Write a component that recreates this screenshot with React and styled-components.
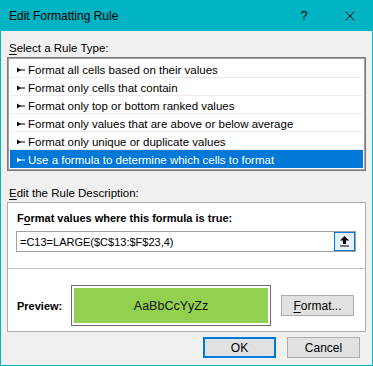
import React from 'react';
import styled, { createGlobalStyle } from 'styled-components';

const GlobalStyle = createGlobalStyle`
  html, body {
    margin: 0;
    padding: 0;
    background: #f0f0f0;
  }
  * {
    box-sizing: border-box;
  }
`

const teal = '#00b4c3';
const blue = '#0078d7';

const Window = styled.div`
  width: 373px;
  height: 366px;
  display: flex;
  flex-direction: column;
  background: #f0f0f0;
  border: 1px solid ${teal};
  border-top: 0;
  font-family: "Segoe UI", "Liberation Sans", sans-serif;
  font-size: 11.5px;
  color: #000;
`

const TitleBar = styled.div`
  height: 31px;
  margin: 0 -1px;
  display: flex;
  align-items: center;
  background: ${teal};
`

const Title = styled.div`
  flex: 1;
  padding-left: 9px;
  font-size: 12px;
  color: #000;
`

const TitleButton = styled.div`
  width: 46px;
  height: 31px;
  display: flex;
  align-items: center;
  justify-content: center;
  font-size: 13px;
  color: #000;
`

const Content = styled.div`
  flex: 1;
  display: flex;
  flex-direction: column;
  padding: 0 6px;
`

const Label = styled.div`
  height: 16px;
  line-height: 16px;
  margin-top: ${p => p.top}px;
  margin-bottom: 1px;
  padding-left: 2px;
`

const Key = styled.span`
  text-decoration: underline;
  text-underline-offset: 2px;
`

const ListBox = styled.div`
  height: 114px;
  padding: 2px 1px 1px;
  background: #fff;
  border: 1px solid #7a7a7a;
  box-shadow: inset 0 0 0 1px #a0a0a0;
  display: flex;
  flex-direction: column;
  & > div {
    margin: 0 1px;
  }
`

const Row = styled.div`
  height: 18px;
  flex-shrink: 0;
  display: flex;
  align-items: center;
  gap: 3px;
  padding: 2px 0 0 7px;
  background: ${p => (p.selected ? blue : '#fff')};
  color: ${p => (p.selected ? '#fff' : '#000')};
  border-bottom: 1px solid ${p => (p.selected ? blue : '#ececec')};
  white-space: nowrap;
`

const DescBox = styled.div`
  height: 130px;
  background: #fff;
  border: 1px solid #adadad;
  display: flex;
  flex-direction: column;
`

const Heading = styled.div`
  height: 16px;
  line-height: 16px;
  margin-top: 7px;
  padding-left: 9px;
  font-size: 11px;
  font-weight: bold;
`

const FormulaInput = styled.div`
  height: 21px;
  margin: 5px 9px 0 8px;
  border: 1px solid #a0a0a0;
  display: flex;
  align-items: center;
  background: #fff;
`

const FormulaText = styled.div`
  flex: 1;
  padding: 1px 0 0 3px;
  font-size: 11px;
`

const CollapseButton = styled.div`
  width: 21px;
  height: 19px;
  border: 1px solid ${blue};
  background: #e5f1fb;
  display: flex;
  align-items: center;
  justify-content: center;
`

const Separator = styled.div`
  height: 1px;
  margin-top: 16px;
  background: #c8c8c8;
`

const PreviewRow = styled.div`
  display: flex;
  align-items: center;
  margin-top: 16px;
  padding-left: 9px;
`

const PreviewLabel = styled.div`
  width: 54px;
  font-size: 11px;
  font-weight: bold;
`

const PreviewFrame = styled.div`
  width: 200px;
  height: 41px;
  padding: 2px;
  border: 1px solid #6d6d6d;
  background: #fff;
`

const PreviewFill = styled.div`
  height: 100%;
  background: #92d050;
  display: flex;
  align-items: center;
  justify-content: center;
  font-size: 12.5px;
  color: #111;
`

const Button = styled.div`
  width: 73px;
  height: 21px;
  display: flex;
  align-items: center;
  justify-content: center;
  font-size: 12px;
  background: #e1e1e1;
  border: ${p => (p.primary ? `2px solid ${blue}` : '1px solid #adadad')};
  margin-left: ${p => p.gap || 0}px;
`

const Footer = styled.div`
  display: flex;
  justify-content: flex-end;
  margin-top: 5px;
  padding-right: 6px;
`

const Pointer = ({ color }) => (
  <svg width="8" height="6" viewBox="0 0 8 6">
    <polygon points="0,0.5 0,5.5 4,3" fill={color} />
    <rect x="3" y="2.5" width="5" height="1" fill={color} />
  </svg>
)

const UploadIcon = () => (
  <svg width="9" height="11" viewBox="0 0 9 11">
    <polygon points="4.5,0 9,4.5 6,4.5 6,8 3,8 3,4.5 0,4.5" fill="#000" />
    <rect x="0" y="9.5" width="9" height="1" fill="#000" />
  </svg>
)

const CloseIcon = () => (
  <svg width="10" height="10" viewBox="0 0 10 10">
    <path d="M0.5 0.5 L9.5 9.5 M9.5 0.5 L0.5 9.5" stroke="#000" strokeWidth="1" />
  </svg>
)

const ruleTypes = [
  'Format all cells based on their values',
  'Format only cells that contain',
  'Format only top or bottom ranked values',
  'Format only values that are above or below average',
  'Format only unique or duplicate values',
  'Use a formula to determine which cells to format',
]

const App = () => {
  return (
    <>
      <GlobalStyle />
      <Window>
        <TitleBar>
          <Title>Edit Formatting Rule</Title>
          <TitleButton>?</TitleButton>
          <TitleButton><CloseIcon /></TitleButton>
        </TitleBar>
        <Content>
          <Label top={9}><Key>S</Key>elect a Rule Type:</Label>
          <ListBox>
            {ruleTypes.map((t, i) => {
              const selected = i === ruleTypes.length - 1;
              return (
                <Row key={t} selected={selected}>
                  <Pointer color={selected ? '#fff' : '#000'} />
                  {t}
                </Row>
              )
            })}
          </ListBox>
          <Label top={14}><Key>E</Key>dit the Rule Description:</Label>
          <DescBox>
            <Heading>F<Key>o</Key>rmat values where this formula is true:</Heading>
            <FormulaInput>
              <FormulaText>=C13=LARGE($C$13:$F$23,4)</FormulaText>
              <CollapseButton><UploadIcon /></CollapseButton>
            </FormulaInput>
            <Separator />
            <PreviewRow>
              <PreviewLabel>Preview:</PreviewLabel>
              <PreviewFrame>
                <PreviewFill>AaBbCcYyZz</PreviewFill>
              </PreviewFrame>
              <Button gap={10}><Key>F</Key>ormat...</Button>
            </PreviewRow>
          </DescBox>
          <Footer>
            <Button primary>OK</Button>
            <Button gap={11}>Cancel</Button>
          </Footer>
        </Content>
      </Window>
    </>
  )
}

export default App;
